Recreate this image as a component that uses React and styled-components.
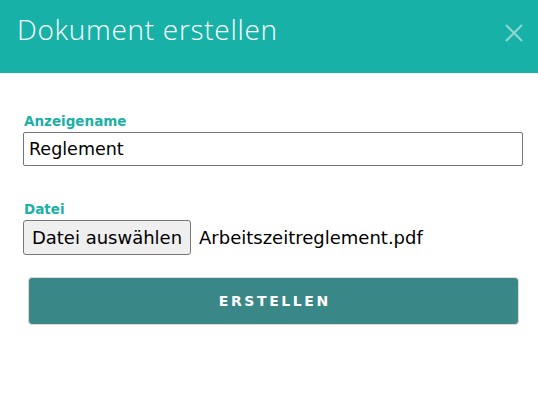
import styled, { createGlobalStyle } from 'styled-components'

const GlobalStyle = createGlobalStyle`
  html, body {
    margin: 0;
    padding: 0;
    background: #ffffff;
  }
`

const Modal = styled.div`
  width: 538px;
  height: 396px;
  background: #ffffff;
  font-family: "DejaVu Sans", "Noto Sans", sans-serif;
`

const Header = styled.div`
  height: 73px;
  background: #17b1a7;
  display: flex;
  align-items: flex-start;
  justify-content: space-between;
  padding: 12px 14px 0 17px;
  box-sizing: border-box;
`

const Title = styled.h1`
  margin: 0;
  font-family: "Open Sans", "Noto Sans", sans-serif;
  font-weight: 300;
  font-size: 28px;
  line-height: 34px;
  color: #ffffff;
  letter-spacing: 0.7px;
`

const Close = styled.button`
  border: none;
  background: none;
  padding: 0;
  margin-top: 11px;
  width: 20px;
  height: 20px;
  cursor: pointer;
  svg {
    display: block;
  }
`

const Body = styled.div`
  padding: 39px 15px 0 23px;
  display: flex;
  flex-direction: column;
`

const Field = styled.div`
  display: flex;
  flex-direction: column;
  margin-bottom: ${p => p.$gap || 0}px;
`

const Label = styled.label`
  font-size: 13.5px;
  font-weight: 700;
  color: #1ab0a6;
  line-height: 18px;
  margin: 0 0 2px 1px;
`

const TextInput = styled.input`
  height: 34px;
  box-sizing: border-box;
  border: 1px solid #767676;
  border-radius: 2px;
  padding: 0 5px;
  font-family: "DejaVu Sans", "Noto Sans", sans-serif;
  font-size: 17.5px;
  color: #000;
  outline: none;
`

const FileRow = styled.div`
  display: flex;
  align-items: center;
  gap: 8px;
`

const FileButton = styled.button`
  height: 35px;
  width: 168px;
  padding: 0;
  background: #efefef;
  border: 1px solid #767676;
  border-radius: 3px;
  font-family: "DejaVu Sans", "Noto Sans", sans-serif;
  font-size: 18px;
  color: #000;
`

const FileName = styled.span`
  font-size: 18px;
  color: #000;
`

const Submit = styled.button`
  margin: 22px 4px 0 5px;
  height: 48px;
  background: #3a8788;
  border: 1px solid #e6d6da;
  border-radius: 4px;
  color: #ffffff;
  font-family: "DejaVu Sans", "Noto Sans", sans-serif;
  font-weight: 700;
  font-size: 14px;
  letter-spacing: 2.6px;
  padding: 0 0 0 2.6px;
  cursor: pointer;
`

const App = () => {
  return (
    <>
      <GlobalStyle />
      <Modal>
        <Header>
          <Title>Dokument erstellen</Title>
          <Close aria-label="Schliessen">
            <svg width="20" height="20" viewBox="0 0 20 20">
              <path d="M2 2 L18 18 M18 2 L2 18" stroke="#8fd8d2" strokeWidth="2" />
            </svg>
          </Close>
        </Header>
        <Body>
          <Field $gap={34}>
            <Label>Anzeigename</Label>
            <TextInput defaultValue="Reglement" />
          </Field>
          <Field>
            <Label>Datei</Label>
            <FileRow>
              <FileButton>Datei auswählen</FileButton>
              <FileName>Arbeitszeitreglement.pdf</FileName>
            </FileRow>
          </Field>
          <Submit>ERSTELLEN</Submit>
        </Body>
      </Modal>
    </>
  )
}

export default App
